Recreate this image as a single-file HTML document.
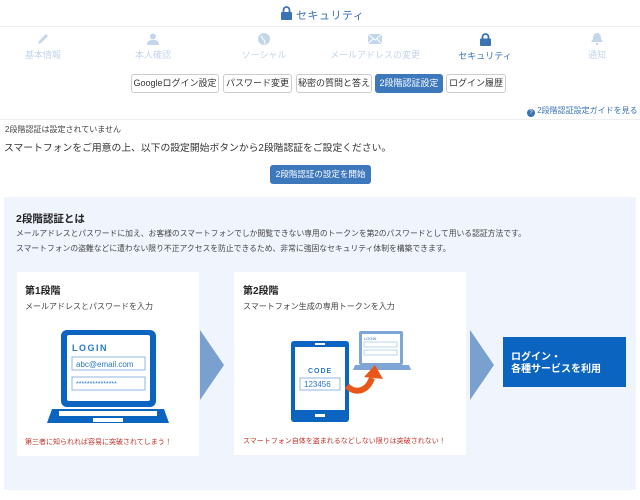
<!DOCTYPE html>
<html><head><meta charset="utf-8"><style>
*{margin:0;padding:0;box-sizing:border-box}
body{width:640px;height:500px;background:#fff;font-family:"Liberation Sans","Noto Sans CJK JP",sans-serif;color:#333;position:relative;overflow:hidden}
.a{position:absolute;white-space:nowrap}
.nav{position:absolute;top:33px;width:110px;text-align:center;color:#c3d6ea;font-size:9px}
.nav svg{display:block;margin:0 auto 3px}
.tab{position:absolute;top:74px;height:19px;border:1px solid #ccc;border-radius:3px;font-size:9px;line-height:17px;text-align:center;color:#333;background:#fff}
.box{position:absolute;background:#fff}
.red{color:#c0302a;font-size:7px}
</style></head><body>
<svg class="a" style="left:281px;top:6px" width="11" height="14" viewBox="0 0 11 14"><path d="M2.5 6V4a3 3 0 0 1 6 0v2" fill="none" stroke="#3b72b4" stroke-width="1.8"/><rect x="0" y="6" width="11" height="8" rx="1" fill="#3b72b4"/></svg>
<div class="a" style="left:296px;top:7px;font-size:11px;letter-spacing:.5px;color:#3b72b4">セキュリティ</div>
<div class="a" style="left:0;top:26px;width:640px;height:1px;background:#eee"></div>

<div class="nav" style="left:-12px"><svg width="12" height="12" viewBox="0 0 12 12"><path d="M1 11l1-3 7-7 2 2-7 7z" fill="#c3d6ea"/></svg>基本情報</div>
<div class="nav" style="left:98px"><svg width="12" height="12" viewBox="0 0 12 12"><circle cx="6" cy="3.5" r="3" fill="#c3d6ea"/><path d="M0 12c0-4 2-5 6-5s6 1 6 5z" fill="#c3d6ea"/></svg>本人確認</div>
<div class="nav" style="left:209px"><svg width="12" height="12" viewBox="0 0 12 12"><circle cx="6" cy="6" r="6" fill="#c3d6ea"/><path d="M3 3c2 1 1 3 3 4s0 3 1 4" stroke="#fff" fill="none"/></svg>ソーシャル</div>
<div class="nav" style="left:320px"><svg width="14" height="12" viewBox="0 0 14 12"><rect y="1" width="14" height="10" fill="#c3d6ea"/><path d="M0 1l7 6 7-6M0 11l5-5M14 11l-5-5" stroke="#fff" fill="none"/></svg>メールアドレスの変更</div>
<div class="nav" style="left:430px;color:#3b72b4"><svg width="11" height="13" viewBox="0 0 11 13"><path d="M2.5 6V4a3 3 0 0 1 6 0v2" fill="none" stroke="#3b72b4" stroke-width="1.8"/><rect y="5.5" width="11" height="7.5" rx="1" fill="#3b72b4"/></svg>セキュリティ</div>
<div class="nav" style="left:542px"><svg width="12" height="12" viewBox="0 0 12 12"><path d="M6 0c3 0 4 3 4 6l2 3H0l2-3c0-3 1-6 4-6z" fill="#c3d6ea"/><circle cx="6" cy="11" r="1.2" fill="#c3d6ea"/></svg>通知</div>

<div class="tab" style="left:131px;width:88px">Googleログイン設定</div>
<div class="tab" style="left:223px;width:69px">パスワード変更</div>
<div class="tab" style="left:296px;width:76px">秘密の質問と答え</div>
<div class="tab" style="left:375px;width:68px;background:#3d78bd;border-color:#3d78bd;color:#fff">2段階認証設定</div>
<div class="tab" style="left:446px;width:60px">ログイン履歴</div>

<div class="a" style="left:527px;top:105px;font-size:8px;color:#3b72b4"><span style="display:inline-block;width:8px;height:8px;border-radius:50%;background:#3b72b4;color:#fff;font-size:6px;text-align:center;line-height:8px;vertical-align:-1px">?</span> 2段階認証設定ガイドを見る</div>
<div class="a" style="left:0;top:119px;width:640px;height:1px;background:#eee"></div>
<div class="a" style="left:5px;top:124px;font-size:8px;color:#444">2段階認証は設定されていません</div>
<div class="a" style="left:4px;top:140px;font-size:9.8px;color:#333">スマートフォンをご用意の上、以下の設定開始ボタンから2段階認証をご設定ください。</div>
<div class="a" style="left:270px;top:165px;width:101px;height:19px;background:#3d78bd;border-radius:3px;color:#fff;font-size:8.5px;text-align:center;line-height:19px">2段階認証の設定を開始</div>

<div class="a" style="left:4px;top:197px;width:632px;height:293px;background:#f0f5fd"></div>
<div class="a" style="left:16px;top:211px;font-size:10.5px;font-weight:bold;color:#222">2段階認証とは</div>
<div class="a" style="left:16px;top:228px;font-size:7.8px;color:#444">メールアドレスとパスワードに加え、お客様のスマートフォンでしか閲覧できない専用のトークンを第2のパスワードとして用いる認証方法です。</div>
<div class="a" style="left:16px;top:243px;font-size:7.8px;color:#444">スマートフォンの盗難などに遭わない限り不正アクセスを防止できるため、非常に強固なセキュリティ体制を構築できます。</div>

<div class="box" style="left:17px;top:272px;width:182px;height:184px">
<div class="a" style="left:8px;top:10px;font-size:10px;font-weight:bold;color:#222">第1段階</div>
<div class="a" style="left:8px;top:29px;font-size:8px;color:#444">メールアドレスとパスワードを入力</div>
<svg class="a" style="left:30px;top:57px" width="122" height="95" viewBox="0 0 122 95"><rect x="14" y="1" width="95" height="77" rx="6" fill="#0a64c0"/><rect x="20" y="6" width="83" height="66" rx="2" fill="#fff"/><path d="M5 80h112l5 14H0z" fill="#0a64c0"/><rect x="12" y="82" width="98" height="5" fill="#fff"/><rect x="46" y="89" width="30" height="4" fill="#fff"/>
<text x="25" y="22" font-size="9" font-weight="bold" fill="#2a78c8" letter-spacing="1.5" font-family="Liberation Sans">LOGIN</text>
<rect x="25" y="28" width="73" height="13" fill="#fff" stroke="#8fb8e4"/><text x="29" y="38" font-size="8" fill="#2a78c8" font-family="Liberation Sans">abc@email.com</text>
<rect x="25" y="48" width="73" height="13" fill="#fff" stroke="#8fb8e4"/><text x="29" y="57" font-size="7" fill="#2a78c8" font-family="Liberation Sans">***************</text></svg>
<div class="a red" style="left:8px;top:165px">第三者に知られれば容易に突破されてしまう！</div>
</div>
<svg class="a" style="left:200px;top:330px" width="24" height="70"><path d="M0 0L24 35 0 70z" fill="#7aa0cf"/></svg>

<div class="box" style="left:234px;top:272px;width:232px;height:183px">
<div class="a" style="left:9px;top:10px;font-size:10px;font-weight:bold;color:#222">第2段階</div>
<div class="a" style="left:9px;top:29px;font-size:8px;color:#444">スマートフォン生成の専用トークンを入力</div>
<svg class="a" style="left:57px;top:57px" width="120" height="95" viewBox="0 0 120 95"><rect x="0" y="12" width="58" height="81" rx="3" fill="#0a64c0"/><rect x="4" y="18" width="50" height="63" fill="#fff"/><rect x="24" y="85" width="10" height="3" fill="#fff"/><rect x="24" y="14" width="10" height="2" fill="#fff"/>
<text x="17" y="44" font-size="7" font-weight="bold" fill="#2a78c8" letter-spacing="1" font-family="Liberation Sans">CODE</text>
<rect x="9" y="49" width="40" height="12" fill="#fff" stroke="#8fb8e4"/><text x="13" y="58" font-size="8" fill="#2a78c8" font-family="Liberation Sans">123456</text>
<rect x="68" y="2" width="44" height="34" rx="2" fill="#7fa4d6"/><rect x="71" y="5" width="38" height="29" fill="#fff"/><path d="M64 36h54l2 5H62z" fill="#7fa4d6"/>
<text x="73" y="11" font-size="4" fill="#2a78c8" font-family="Liberation Sans">LOGIN</text><rect x="73" y="13" width="33" height="5" fill="none" stroke="#8fb8e4" stroke-width=".6"/><rect x="73" y="21" width="33" height="5" fill="none" stroke="#8fb8e4" stroke-width=".6"/>
<path d="M56 57c8 8 20 6 25-8" fill="none" stroke="#e8561a" stroke-width="6"/><path d="M73 48l11-12 8 14z" fill="#e8561a"/></svg>
<div class="a red" style="left:9px;top:164px">スマートフォン自体を盗まれるなどしない限りは突破されない！</div>
</div>
<svg class="a" style="left:470px;top:330px" width="24" height="70"><path d="M0 0L24 35 0 70z" fill="#7aa0cf"/></svg>
<div class="a" style="left:503px;top:337px;width:123px;height:50px;background:#0a64c0;color:#fff;font-size:10px;font-weight:bold;line-height:12px;padding:15px 0 0 8px">ログイン・<br>各種サービスを利用</div>
</body></html>
